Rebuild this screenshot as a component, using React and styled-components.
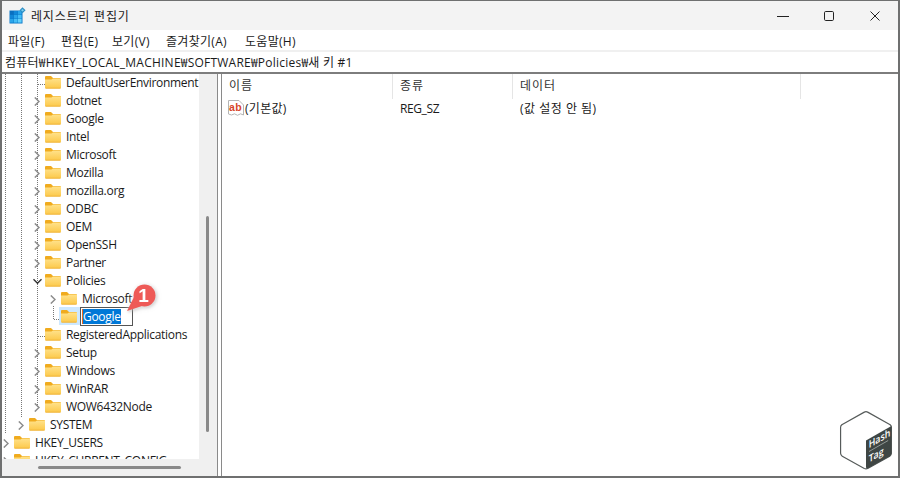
import React from "react";
import styled, { createGlobalStyle } from "styled-components";

const uiFont = `"Open Sans", "Noto Sans CJK KR", sans-serif`;

const GlobalStyle = createGlobalStyle`
  html, body {
    margin: 0;
    padding: 0;
    background: #fff;
  }
  body {
    font-family: ${uiFont};
    font-size: 12px;
    color: #1a1a1a;
  }
`;

const treeRows = [
  { label: "DefaultUserEnvironment", level: 3 },
  { label: "dotnet", level: 3, arrow: "right" },
  { label: "Google", level: 3, arrow: "right" },
  { label: "Intel", level: 3, arrow: "right" },
  { label: "Microsoft", level: 3, arrow: "right" },
  { label: "Mozilla", level: 3, arrow: "right" },
  { label: "mozilla.org", level: 3, arrow: "right" },
  { label: "ODBC", level: 3, arrow: "right" },
  { label: "OEM", level: 3, arrow: "right" },
  { label: "OpenSSH", level: 3, arrow: "right" },
  { label: "Partner", level: 3, arrow: "right" },
  { label: "Policies", level: 3, arrow: "down" },
  { label: "Microsoft", level: 4, arrow: "right" },
  { label: "Google", level: 4, editing: true },
  { label: "RegisteredApplications", level: 3 },
  { label: "Setup", level: 3, arrow: "right" },
  { label: "Windows", level: 3, arrow: "right" },
  { label: "WinRAR", level: 3, arrow: "right" },
  { label: "WOW6432Node", level: 3, arrow: "right" },
  { label: "SYSTEM", level: 2, arrow: "right" },
  { label: "HKEY_USERS", level: 1, arrow: "right" },
  { label: "HKEY_CURRENT_CONFIG", level: 1, arrow: "right" },
];

const menus = [
  { label: "파일(F)", width: 53 },
  { label: "편집(E)", width: 51 },
  { label: "보기(V)", width: 54 },
  { label: "즐겨찾기(A)", width: 79 },
  { label: "도움말(H)", width: 60 },
];

const gridColors = [
  ["#0a6fc0", "#1187d8", "#2aa5ea"],
  ["#1187d8", "#2aa5ea", "#45bdf5"],
  ["#2aa5ea", "#45bdf5", "#63d0fb"],
];

function AppIcon() {
  return (
    <svg width="17" height="17" viewBox="0 0 17 17">
      <rect x="0.5" y="3.5" width="13" height="13" fill="#0b79c9" />
      {gridColors.map((row, r) =>
        row.map((color, c) => (
          <rect key={`${r}-${c}`} x={1 + c * 4} y={4 + r * 4} width="3.6" height="3.6" fill={color} />
        ))
      )}
      <path d="M13.5 0.3 16.6 3.3 13.5 6.3 10.5 3.3Z" fill="#2f8fc4" />
      <path d="M13.5 2 15 3.3 13.5 4.6 12.1 3.3Z" fill="#7fd0f0" />
    </svg>
  );
}

function FolderIcon() {
  return (
    <svg width="16" height="14" viewBox="0 0 16 14">
      <defs>
        <linearGradient id="folderFront" x1="0" y1="0" x2="0" y2="1">
          <stop offset="0" stopColor="#ffe28a" />
          <stop offset="1" stopColor="#fcc84a" />
        </linearGradient>
      </defs>
      <path d="M0 2A1 1 0 0 1 1 1H6L8 3H15A1 1 0 0 1 16 4V6H0Z" fill="#f0ab1e" />
      <path d="M0 4.5H6.5L8 3.5H16V12.5A1 1 0 0 1 15 13.5H1A1 1 0 0 1 0 12.5Z" fill="url(#folderFront)" />
      <path d="M0.5 13.2H15.5" stroke="#eeb035" strokeWidth="0.8" />
    </svg>
  );
}

function Chevron({ dir }) {
  return (
    <svg width="9" height="9" viewBox="0 0 9 9" fill="none">
      {dir === "down" ? (
        <path d="M0.5 2.2 4.5 6.2 8.5 2.2" stroke="#333" strokeWidth="1.4" />
      ) : (
        <path d="M1.8 0.4 6 4.5 1.8 8.6" stroke="#8c8c8c" strokeWidth="1.4" />
      )}
    </svg>
  );
}

function ValueIcon() {
  return (
    <svg width="16" height="16" viewBox="0 0 16 16">
      <path d="M0.5 0.5H11L15.5 5V15L12.5 13.8 9.5 15.3 6.5 13.8 3.5 15 0.5 14Z" fill="#fff" stroke="#b4b4b4" strokeWidth="1" />
      <text x="1" y="10.8" fontFamily="Liberation Sans, sans-serif" fontSize="10.5" fontWeight="700" fill="#d8452a">ab</text>
    </svg>
  );
}

function TreeGuides() {
  const dots = { stroke: "#777", strokeWidth: 1, strokeDasharray: "1 1", fill: "none" };
  return (
    <Guides width="199" height="386" viewBox="0 0 199 386">
      <path d="M5.5 0V360" {...dots} />
      <path d="M21.5 0V344" {...dots} />
      <path d="M37.5 0V334" {...dots} />
      <path d="M38 10.5H45" {...dots} />
      <path d="M38 262.5H45" {...dots} />
      <path d="M53.5 232V245.5H59" {...dots} />
    </Guides>
  );
}

function StepBadge() {
  return (
    <Badge>
      <svg width="30" height="30" viewBox="0 0 30 30" overflow="visible">
        <path d="M1 27 9 11 19 21Z" fill="#ee5a57" />
        <circle cx="18.5" cy="11.5" r="11" fill="#ee5a57" />
      </svg>
      <BadgeNumber>1</BadgeNumber>
    </Badge>
  );
}

function HashTagLogo() {
  return (
    <Logo width="56" height="61" viewBox="0 0 66 72">
      <path d="M31 2.5 Q33 1.5 35 2.5 L61 17 Q63 18 63 20.5 V51 Q63 53 61 54.5 L35 69 Q33 70 31 69 L5 54.5 Q3 53 3 51 V20.5 Q3 18 5 17Z" fill="#fff" stroke="#565b5a" strokeWidth="1.4" />
      <path d="M33 36 L63 19 V51 Q63 53 61 54.5 L35 69 Q33 70 33 67Z" fill="#3f4644" />
      <g transform="matrix(0.87 -0.5 0 1 0 0)" fill="#fff" fontFamily="Open Sans, sans-serif" fontWeight="600">
        <text x="41.5" y="66" fontSize="12">Hash</text>
        <path d="M42 70H68" stroke="#9aa09e" strokeWidth="1" />
        <text x="41.5" y="83" fontSize="12">Tag</text>
      </g>
    </Logo>
  );
}

export default function App() {
  return (
    <>
      <GlobalStyle />
      <Window>
        <TitleBar>
          <TitleIcon>
            <AppIcon />
          </TitleIcon>
          <Title>레지스트리 편집기</Title>
          <WindowButtons>
            <WindowButton>
              <svg width="12" height="12" viewBox="0 0 12 12"><path d="M0 6.5H12" stroke="#222" /></svg>
            </WindowButton>
            <WindowButton>
              <svg width="12" height="12" viewBox="0 0 12 12"><rect x="1.5" y="1.5" width="9" height="9" rx="1.2" fill="none" stroke="#222" /></svg>
            </WindowButton>
            <WindowButton>
              <svg width="12" height="12" viewBox="0 0 12 12"><path d="M1.5 1.5 10.5 10.5M10.5 1.5 1.5 10.5" stroke="#222" /></svg>
            </WindowButton>
          </WindowButtons>
        </TitleBar>

        <MenuBar>
          {menus.map((menu) => (
            <MenuItem key={menu.label} $width={menu.width}>{menu.label}</MenuItem>
          ))}
        </MenuBar>

        <AddressBar>컴퓨터₩HKEY_LOCAL_MACHINE₩SOFTWARE₩Policies₩새 키 #1</AddressBar>

        <Body>
          <TreePane>
            <TreeArea>
              <TreeList>
                <TreeGuides />
                <TreeRows>
                  {treeRows.map((row, i) => (
                    <TreeRow key={i} $level={row.level}>
                      <ArrowSlot>{row.arrow && <Chevron dir={row.arrow} />}</ArrowSlot>
                      <FolderSlot $active={row.editing}>
                        <FolderIcon />
                      </FolderSlot>
                      {row.editing ? (
                        <EditBox>
                          <Selected>{row.label}</Selected>
                        </EditBox>
                      ) : (
                        <RowLabel>{row.label}</RowLabel>
                      )}
                    </TreeRow>
                  ))}
                </TreeRows>
                <StepBadge />
              </TreeList>
              <VScroll>
                <VThumb />
              </VScroll>
            </TreeArea>
            <HScroll>
              <HThumb />
            </HScroll>
          </TreePane>

          <Splitter />

          <ListPane>
            <ListHeader>
              <HeaderCell $width={171}>이름</HeaderCell>
              <HeaderCell $width={120}>종류</HeaderCell>
              <HeaderCell $width={288}>데이터</HeaderCell>
            </ListHeader>
            <ListRow>
              <NameCell>
                <ValueIcon />
                <span>(기본값)</span>
              </NameCell>
              <TypeCell>REG_SZ</TypeCell>
              <DataCell>(값 설정 안 됨)</DataCell>
            </ListRow>
            <HashTagLogo />
          </ListPane>
        </Body>
      </Window>
    </>
  );
}

const Window = styled.div`
  box-sizing: border-box;
  width: 900px;
  height: 478px;
  display: flex;
  flex-direction: column;
  border-style: solid;
  border-color: #6f7070;
  border-width: 1px 2px 2px 2px;
  overflow: hidden;
  background: #fff;
`;

const TitleBar = styled.div`
  flex: 0 0 29px;
  display: flex;
  align-items: center;
  background: #f3f3f3;
`;

const TitleIcon = styled.div`
  display: flex;
  margin-left: 7px;
  margin-right: 5px;
`;

const Title = styled.div`
  font-size: 12px;
  letter-spacing: 0.8px;
  color: #222;
`;

const WindowButtons = styled.div`
  margin-left: auto;
  display: flex;
`;

const WindowButton = styled.div`
  width: 46px;
  height: 29px;
  display: flex;
  align-items: center;
  justify-content: center;
`;

const MenuBar = styled.div`
  flex: 0 0 19px;
  display: flex;
  align-items: center;
  padding-left: 6px;
  background: #fff;
  padding-top: 1px;
`;

const MenuItem = styled.div`
  width: ${(p) => p.$width}px;
  font-size: 12px;
  letter-spacing: 0.3px;
  white-space: nowrap;
`;

const AddressBar = styled.div`
  flex: 0 0 22px;
  box-sizing: border-box;
  border-top: 2px solid #f0f0f0;
  display: flex;
  align-items: center;
  padding-left: 3px;
  font-size: 12px;
  letter-spacing: 0.23px;
  white-space: pre;
`;

const Body = styled.div`
  flex: 1;
  min-height: 0;
  display: flex;
  border-top: 2px solid #7d7d7d;
`;

const TreePane = styled.div`
  flex: 0 0 215px;
  display: flex;
  flex-direction: column;
  background: #f0f0f0;
`;

const TreeArea = styled.div`
  flex: 1;
  min-height: 0;
  display: flex;
`;

const TreeList = styled.div`
  position: relative;
  flex: 0 0 197px;
  background: #fff;
  overflow: hidden;
`;

const TreeRows = styled.div`
  margin-top: -1px;
`;

const Guides = styled.svg`
  position: absolute;
  left: -2px;
  top: 0;
  pointer-events: none;
`;

const TreeRow = styled.div`
  position: relative;
  height: 18px;
  display: flex;
  align-items: center;
  padding-left: ${(p) => (p.$level - 1) * 16 - 1}px;
  white-space: nowrap;
`;

const ArrowSlot = styled.div`
  flex: 0 0 12px;
  display: flex;
  justify-content: flex-start;
  margin-top: 2px;
`;

const FolderSlot = styled.div`
  width: 16px;
  height: 18px;
  display: flex;
  align-items: center;
  justify-content: center;
  margin-right: 5px;
  box-shadow: ${(p) => (p.$active ? "-2px 0 0 #cde8ff, 3px 0 0 #cde8ff" : "none")};
  background: ${(p) => (p.$active ? "#cde8ff" : "transparent")};
`;

const RowLabel = styled.span`
  font-size: 12px;
  letter-spacing: -0.3px;
  color: #1a1a1a;
`;

const EditBox = styled.div`
  box-sizing: border-box;
  height: 19px;
  width: 53px;
  margin-left: -2px;
  display: flex;
  align-items: center;
  padding-left: 1px;
  border: 1px solid #555;
  background: #fff;
`;

const Selected = styled.span`
  background: #0078d7;
  color: #fff;
  line-height: 15px;
  font-size: 12px;
  letter-spacing: -0.3px;
  border-left: 1px solid #e86a1f;
`;

const Badge = styled.div`
  position: absolute;
  left: 124px;
  top: 210px;
  width: 30px;
  height: 30px;
  filter: drop-shadow(0 0 2px rgba(255, 255, 255, 0.9)) drop-shadow(1px 1px 1px rgba(0, 0, 0, 0.25));
`;

const BadgeNumber = styled.span`
  position: absolute;
  left: 6px;
  top: 0;
  width: 23px;
  text-align: center;
  color: #fff;
  font: 700 19px "Liberation Sans", sans-serif;
  line-height: 23px;
`;

const VScroll = styled.div`
  flex: 1;
  position: relative;
  background: #f0f0f0;
`;

const VThumb = styled.div`
  position: absolute;
  left: 7px;
  top: 142px;
  width: 3px;
  height: 216px;
  border-radius: 2px;
  background: #8a8a8a;
`;

const HScroll = styled.div`
  flex: 0 0 17px;
  position: relative;
  background: #f0f0f0;
`;

const HThumb = styled.div`
  position: absolute;
  left: 36px;
  top: 7px;
  width: 143px;
  height: 3px;
  border-radius: 2px;
  background: #8a8a8a;
`;

const Splitter = styled.div`
  flex: 0 0 5px;
  box-sizing: border-box;
  background: #fff;
  border-left: 1px solid #8a8a8a;
  border-right: 1px solid #8a8a8a;
`;

const ListPane = styled.div`
  position: relative;
  flex: 1;
  min-width: 0;
  background: #fff;
`;

const ListHeader = styled.div`
  height: 25px;
  display: flex;
`;

const HeaderCell = styled.div`
  box-sizing: border-box;
  width: ${(p) => p.$width}px;
  height: 25px;
  line-height: 23px;
  padding-left: 7px;
  letter-spacing: 1px;
  color: #333;
  border-right: 1px solid #e5e5e5;
`;

const ListRow = styled.div`
  height: 18px;
  display: flex;
  align-items: center;
`;

const NameCell = styled.div`
  width: 171px;
  box-sizing: border-box;
  padding-left: 6px;
  display: flex;
  align-items: center;
  gap: 1px;
  letter-spacing: 0.3px;
`;

const TypeCell = styled.div`
  width: 120px;
  box-sizing: border-box;
  padding-left: 7px;
  letter-spacing: -0.4px;
`;

const DataCell = styled.div`
  padding-left: 7px;
  letter-spacing: 0.5px;
`;

const Logo = styled.svg`
  position: absolute;
  right: 4px;
  bottom: 5px;
`;
